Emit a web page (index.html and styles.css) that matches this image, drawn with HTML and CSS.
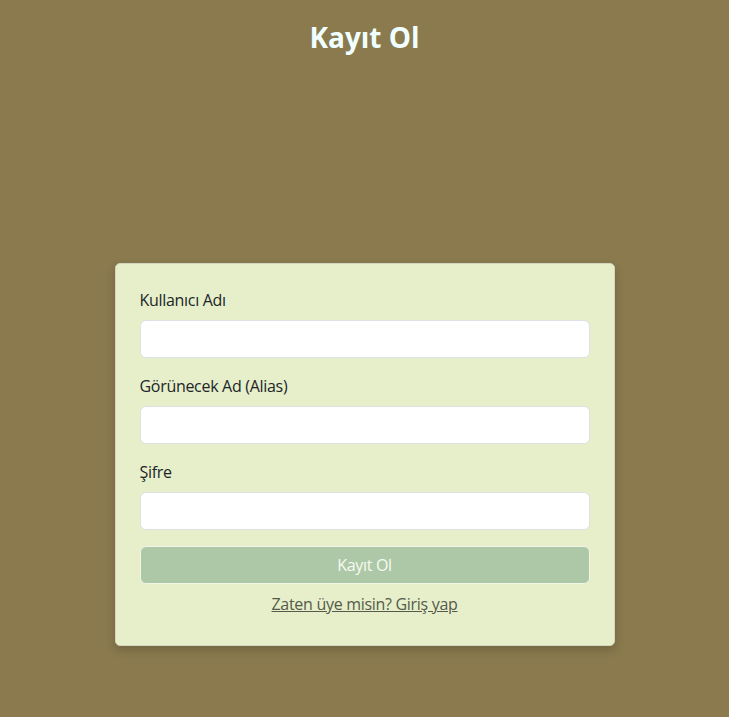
FILE: index.html
```html
<!DOCTYPE html>
<html lang="tr">
<head>
<meta charset="utf-8">
<title>Kayıt Ol</title>
<link rel="stylesheet" href="styles.css">
</head>
<body>
<main class="page">
  <h1 class="title">Kayıt Ol</h1>
  <form class="card">
    <div class="field">
      <label class="label" for="u">Kullanıcı Adı</label>
      <input class="input" id="u" type="text">
    </div>
    <div class="field">
      <label class="label" for="a">Görünecek Ad (Alias)</label>
      <input class="input" id="a" type="text">
    </div>
    <div class="field">
      <label class="label" for="p">Şifre</label>
      <input class="input" id="p" type="password">
    </div>
    <button class="btn" type="button">Kayıt Ol</button>
    <p class="switch"><a href="#" class="link">Zaten üye misin? Giriş yap</a></p>
  </form>
</main>
</body>
</html>
```

FILE: styles.css
```css
* { box-sizing: border-box; }
html, body { margin: 0; padding: 0; }
body {
  background: #8a7a4e;
  font-family: "Open Sans", "Noto Sans", sans-serif;
  font-size: 16px;
  line-height: 1.5;
  color: #212529;
  min-height: 100vh;
}
.page {
  display: flex;
  flex-direction: column;
  align-items: center;
  padding-top: 16px;
}
.title {
  margin: 0;
  font-size: 28px;
  font-weight: 700;
  line-height: 1.5;
  color: #f0ffff;
}
.card {
  margin-top: 205px;
  width: 500px;
  background: #e6efc9;
  border: 1px solid #d2d6bf;
  border-radius: 5px;
  box-shadow: 0 4px 10px rgba(0,0,0,0.18);
  padding: 24px 24px 29px;
  display: flex;
  flex-direction: column;
  letter-spacing: -0.3px;
}
.field {
  display: flex;
  flex-direction: column;
  margin-bottom: 16px;
}
.label {
  margin-bottom: 8px;
  font-size: 16px;
  color: #212529;
}
.input {
  height: 38px;
  border: 1px solid #dee2e6;
  border-radius: 6px;
  background: #fff;
  padding: 6px 12px;
  font: inherit;
}
.btn {
  height: 38px;
  border: 1px solid #f2f4ea;
  border-radius: 6px;
  background: #adc8a6;
  color: #f7faf3;
  font: inherit;
  letter-spacing: -0.3px;
}
.switch {
  margin: 8px 0 0;
  text-align: center;
}
.link {
  color: #555a4c;
  text-decoration: underline;
}
```
